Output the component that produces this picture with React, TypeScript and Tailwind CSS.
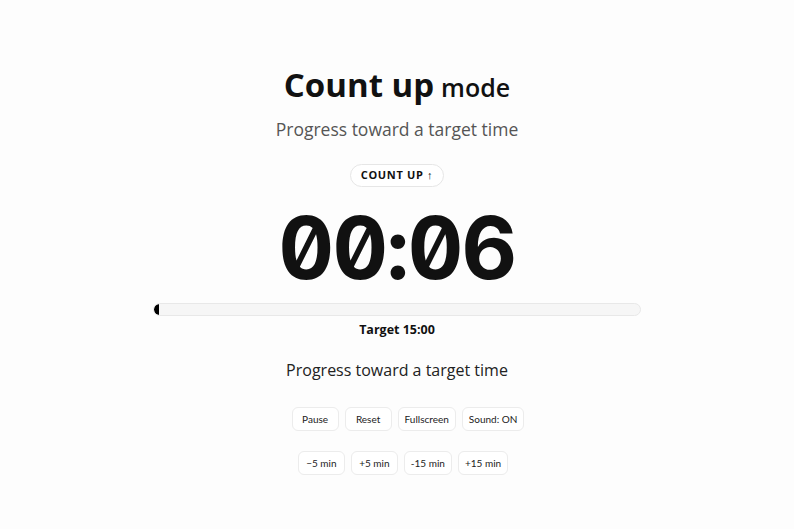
import React from 'react';

const controls = ['Pause', 'Reset', 'Fullscreen', 'Sound: ON'];
const adjust = ['−5 min', '+5 min', '-15 min', '+15 min'];

const Btn = ({ label }: { label: string }) => (
  <button
    className="h-[24px] min-w-[47px] px-[6px] rounded-md border border-[#ececec] bg-white text-[10px] text-[#222] leading-none"
    style={{ fontFamily: 'Lato, "Open Sans", sans-serif' }}
  >
    {label}
  </button>
);

export default function App() {
  const elapsed = 6;
  const target = 15 * 60;
  const pct = Math.max(1, (elapsed / target) * 100);

  return (
    <div
      className="w-[794px] h-[529px] bg-[#fdfdfd] flex flex-col items-center text-[#111]"
      style={{ fontFamily: '"Open Sans", "Noto Sans", sans-serif' }}
    >
      <h1 className="mt-[68px] flex items-baseline gap-[7px] leading-none">
        <span className="text-[33px] font-bold">Count up</span>
        <span className="text-[25px] font-semibold">mode</span>
      </h1>
      <p className="mt-[20px] text-[17.5px] text-[#555] leading-none">Progress toward a target time</p>

      <div className="mt-[25px] h-[23px] px-[10px] rounded-full border border-[#e6e6e6] bg-white flex items-center text-[11px] font-bold tracking-[0.06em]">
        COUNT UP ↑
      </div>

      <div
        className="mt-[18px] text-[86px] font-bold leading-none slashed-zero tabular-nums tracking-[-0.02em]"
        style={{ fontFamily: 'Inter, sans-serif' }}
      >
        00:06
      </div>

      <div className="mt-[12px] w-[488px] h-[13px] rounded-full border border-[#e8e8e8] bg-[#f6f6f6] overflow-hidden">
        <div className="h-full bg-black rounded-l-full" style={{ width: `${pct}%`, minWidth: '5px' }} />
      </div>

      <div className="mt-[8px] text-[12.5px] font-bold leading-none">Target 15:00</div>

      <p className="mt-[26px] text-[16px] text-[#222] leading-none">Progress toward a target time</p>

      <div className="mt-[29px] pl-[22px] flex gap-[6px]">
        {controls.map((c) => (
          <Btn key={c} label={c} />
        ))}
      </div>
      <div className="mt-[20px] pl-[12px] flex gap-[6px]">
        {adjust.map((c) => (
          <Btn key={c} label={c} />
        ))}
      </div>
    </div>
  );
}
